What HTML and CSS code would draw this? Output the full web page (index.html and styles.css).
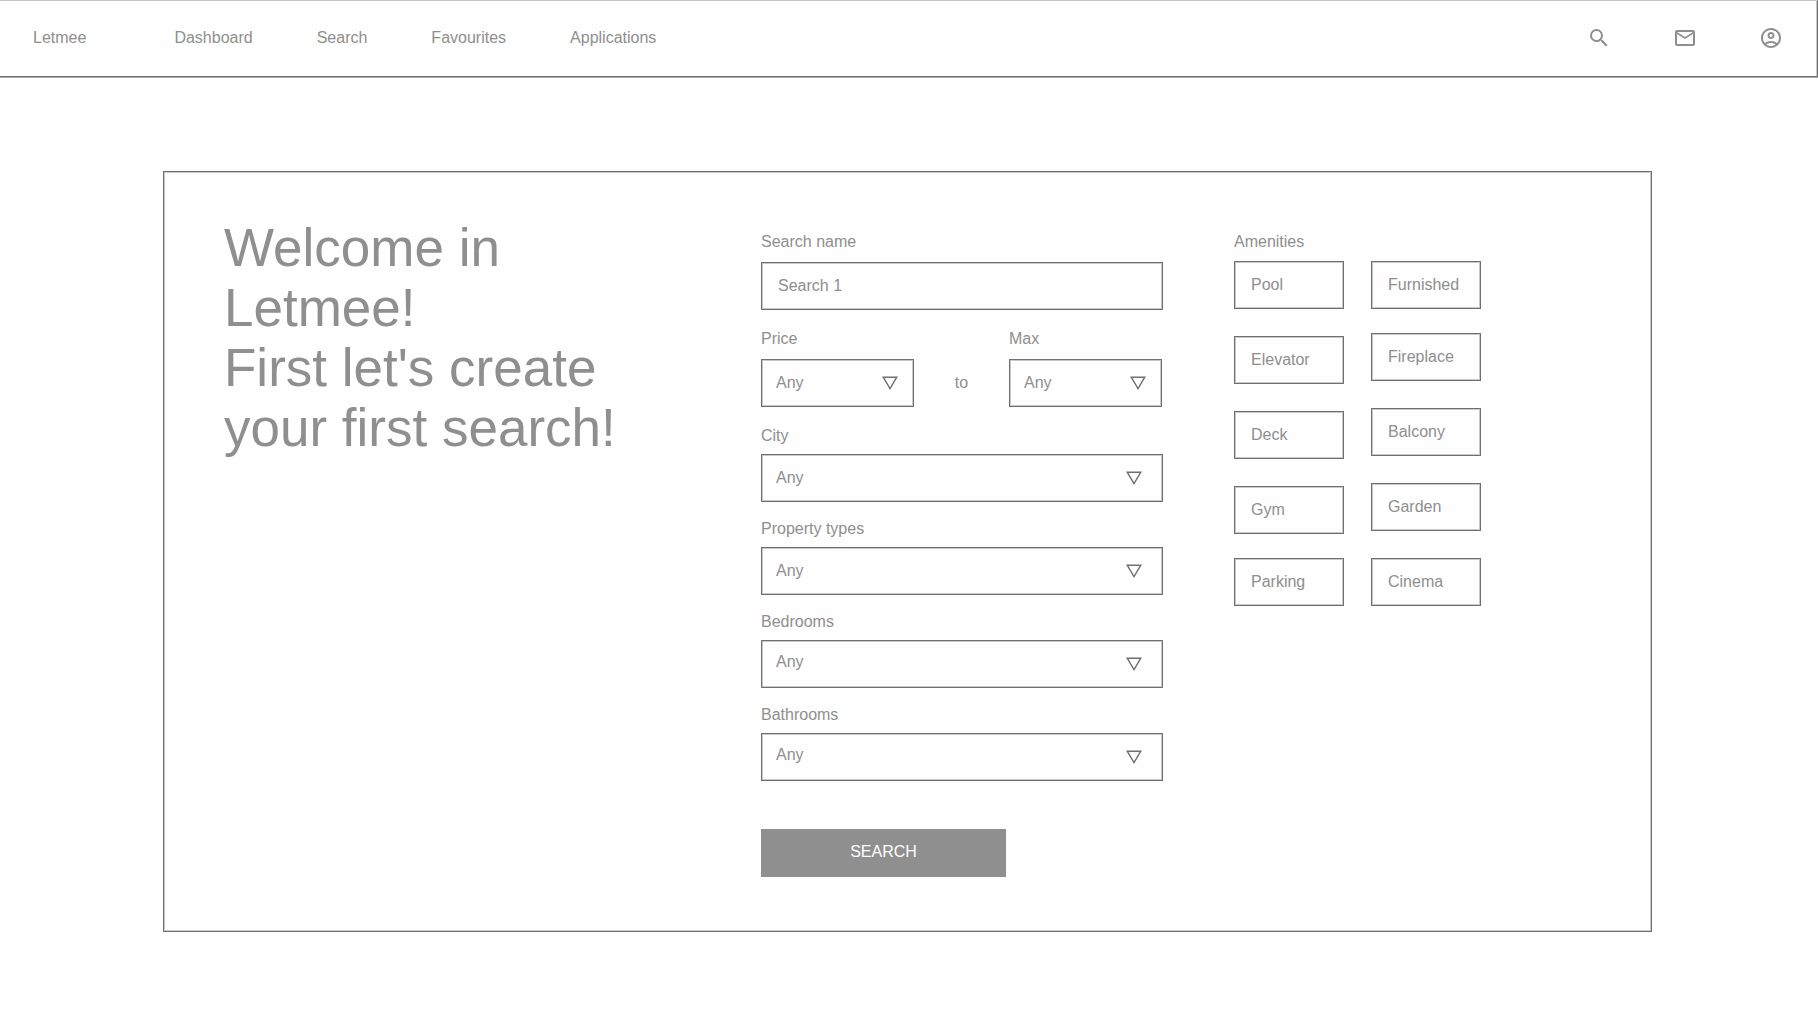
FILE: index.html
```html
<!DOCTYPE html>
<html lang="en">
<head>
<meta charset="utf-8">
<meta name="viewport" content="width=device-width, initial-scale=1">
<title>Letmee</title>
<link rel="stylesheet" href="styles.css">
</head>
<body>
<svg class="sprite" aria-hidden="true">
  <symbol id="caret" viewBox="0 0 16 14"><path d="M1.2 1.2h13.6L8 12.6z" fill="none" stroke="#707070" stroke-width="1.4"/></symbol>
</svg>

<header class="topbar">
  <a class="brand" href="#">Letmee</a>
  <nav class="nav">
    <a href="#">Dashboard</a>
    <a href="#">Search</a>
    <a href="#">Favourites</a>
    <a href="#">Applications</a>
  </nav>
  <div class="tools">
    <a href="#" aria-label="Search"><svg class="icon" viewBox="0 0 24 24"><path d="M15.5 14h-.79l-.28-.27A6.471 6.471 0 0 0 16 9.5 6.5 6.5 0 1 0 9.5 16c1.61 0 3.09-.59 4.23-1.57l.27.28v.79l5 4.99L20.49 19l-4.99-5zm-6 0C7.01 14 5 11.99 5 9.5S7.01 5 9.5 5 14 7.01 14 9.5 11.99 14 9.5 14z"/></svg></a>
    <a href="#" aria-label="Messages"><svg class="icon" viewBox="0 0 24 24"><path d="M20 4H4c-1.1 0-1.99.9-1.99 2L2 18c0 1.1.9 2 2 2h16c1.1 0 2-.9 2-2V6c0-1.1-.9-2-2-2zm0 14H4V8l8 5 8-5v10zm-8-7L4 6h16l-8 5z"/></svg></a>
    <a href="#" aria-label="Account"><svg class="icon" viewBox="0 0 24 24"><path d="M12 2C6.48 2 2 6.48 2 12s4.48 10 10 10 10-4.48 10-10S17.52 2 12 2zM7.35 18.5C8.66 17.56 10.26 17 12 17s3.34.56 4.65 1.5c-1.31.94-2.91 1.5-4.65 1.5s-3.34-.56-4.65-1.5zm10.79-1.38C16.45 15.8 14.32 15 12 15s-4.45.8-6.14 2.12C4.7 15.73 4 13.95 4 12c0-4.42 3.58-8 8-8s8 3.58 8 8c0 1.95-.7 3.73-1.86 5.12zM12 6c-1.93 0-3.5 1.57-3.5 3.5S10.07 13 12 13s3.5-1.57 3.5-3.5S13.93 6 12 6zm0 5c-.83 0-1.5-.67-1.5-1.5S11.17 8 12 8s1.5.67 1.5 1.5S12.83 11 12 11z"/></svg></a>
  </div>
</header>

<main class="page">
  <section class="card">
    <h1 class="welcome">Welcome in Letmee!<br>First let's create your first search!</h1>

    <form class="search-form">
      <div class="field field-roomy">
        <label for="name">Search name</label>
        <input class="box" id="name" type="text" value="Search 1">
      </div>
      <div class="range">
        <div class="field field-roomy">
          <label for="min">Price</label>
          <div class="select"><select class="box" id="min"><option>Any</option></select><svg class="caret"><use href="#caret"/></svg></div>
        </div>
        <span class="range-to">to</span>
        <div class="field field-roomy">
          <label for="max">Max</label>
          <div class="select"><select class="box" id="max"><option>Any</option></select><svg class="caret"><use href="#caret"/></svg></div>
        </div>
      </div>
      <div class="field">
        <label for="city">City</label>
        <div class="select select-wide"><select class="box" id="city"><option>Any</option></select><svg class="caret"><use href="#caret"/></svg></div>
      </div>
      <div class="field">
        <label for="type">Property types</label>
        <div class="select select-wide"><select class="box" id="type"><option>Any</option></select><svg class="caret"><use href="#caret"/></svg></div>
      </div>
      <div class="field field-rooms">
        <label for="bedrooms">Bedrooms</label>
        <div class="select select-wide"><select class="box" id="bedrooms"><option>Any</option></select><svg class="caret"><use href="#caret"/></svg></div>
      </div>
      <div class="field field-rooms">
        <label for="bathrooms">Bathrooms</label>
        <div class="select select-wide"><select class="box" id="bathrooms"><option>Any</option></select><svg class="caret"><use href="#caret"/></svg></div>
      </div>
      <button class="submit" type="submit">SEARCH</button>
    </form>

    <section class="amenities">
      <h2 class="amenities-title">Amenities</h2>
      <div class="amenities-grid">
        <div class="amenities-main">
          <button class="box" type="button">Pool</button>
          <button class="box" type="button">Elevator</button>
          <button class="box" type="button">Deck</button>
          <button class="box" type="button">Gym</button>
          <button class="box" type="button">Parking</button>
        </div>
        <div class="amenities-more">
          <button class="box" type="button">Furnished</button>
          <button class="box" type="button">Fireplace</button>
          <button class="box" type="button">Balcony</button>
          <button class="box" type="button">Garden</button>
          <button class="box" type="button">Cinema</button>
        </div>
      </div>
    </section>
  </section>
</main>
</body>
</html>
```
FILE: styles.css
```css
:root {
  --text: #8f8f8f;
  --line: #707070;
  --line-soft: #c8c8c8;
}

* {
  box-sizing: border-box;
}

body {
  margin: 0;
  background: #fefefe;
  color: var(--text);
  font: 16px/18px "Liberation Sans", Arial, sans-serif;
}

a {
  color: inherit;
  text-decoration: none;
}

.sprite {
  display: none;
}

/* Top bar */
.topbar {
  display: flex;
  align-items: center;
  height: 77px;
  padding: 0 34px 2px 33px;
  border: 1px solid var(--line);
  border-top-color: var(--line-soft);
  border-left: 0;
  box-shadow: 0 1px #a8a8a8, inset -1px 0 var(--line-soft);
}

.nav {
  display: flex;
  gap: 64px;
  margin-left: 88px;
}

.tools {
  display: flex;
  gap: 62px;
  margin-left: auto;
}

.icon {
  display: block;
  width: 24px;
  height: 24px;
  fill: var(--text);
}

/* Card */
.page {
  padding: 94px 166px 90px 163px;
}

.card {
  display: grid;
  grid-template-columns: 466fr 402fr 247fr;
  column-gap: 71px;
  padding: 46px 170px 54px 60px;
  border: 1px solid var(--line);
  box-shadow: inset 0 0 0 1px var(--line-soft);
}

.welcome {
  margin: 0;
  font-size: 53px;
  font-weight: 400;
  line-height: 60px;
}

/* Shared outlined box */
.box {
  width: 100%;
  height: 48px;
  margin: 0;
  padding: 0 16px;
  border: 1px solid var(--line);
  border-radius: 0;
  background: transparent;
  box-shadow: inset 0 0 0 1px var(--line-soft);
  color: inherit;
  font: inherit;
  text-align: left;
  appearance: none;
}

/* Form */
.search-form {
  display: flex;
  flex-direction: column;
  gap: 18px;
  padding-top: 15px;
}

.field {
  display: flex;
  flex-direction: column;
  gap: 9px;
}

.field-roomy {
  gap: 11px;
  margin-bottom: 2px;
}

.range {
  display: grid;
  grid-template-columns: 1fr 95px 1fr;
  padding-right: 1px;
}

.range-to {
  align-self: end;
  padding-bottom: 17px;
  text-align: center;
}

.select {
  display: grid;
  align-items: center;
}

.select > * {
  grid-area: 1 / 1;
}

.select .box {
  padding: 0 14px;
}

.field-rooms .select .box {
  padding-bottom: 4px;
}

.caret {
  width: 16px;
  height: 14px;
  margin-right: 16px;
  justify-self: end;
  pointer-events: none;
}

.select-wide .caret {
  margin-right: 21px;
}

.submit {
  align-self: start;
  width: 245px;
  height: 48px;
  margin-top: 30px;
  padding: 0 0 3px;
  border: 0;
  background: var(--text);
  color: #fefefe;
  font: inherit;
}

/* Amenities */
.amenities {
  padding-top: 15px;
}

.amenities-title {
  margin: 0 0 10px;
  font-size: 16px;
  font-weight: 400;
}

.amenities-grid {
  display: grid;
  grid-template-columns: 1fr 1fr;
  column-gap: 27px;
}

.amenities .box + .box {
  margin-top: 27px;
}

.amenities-main .box:last-child,
.amenities-more .box:nth-child(2) {
  margin-top: 24px;
}
```
